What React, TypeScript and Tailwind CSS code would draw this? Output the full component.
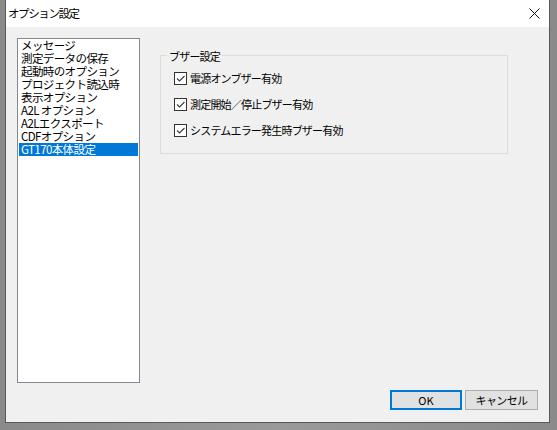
const font = "font-['Noto_Sans_CJK_JP','Noto_Sans',sans-serif]";

const items = [
  'メッセージ',
  '測定データの保存',
  '起動時のオプション',
  'プロジェクト読込時',
  '表示オプション',
  'A2L オプション',
  'A2Lエクスポート',
  'CDFオプション',
  'GT170本体設定',
];

const options = ['電源オンブザー有効', '測定開始／停止ブザー有効', 'システムエラー発生時ブザー有効'];

function CheckBox() {
  return (
    <span className="w-[13px] h-[13px] border border-[#333333] bg-white flex items-center justify-center shrink-0">
      <svg width="11" height="11" viewBox="0 0 11 11">
        <path d="M2 5.5 L4.5 8 L9.5 3" fill="none" stroke="#3a3a3a" strokeWidth="1.1" />
      </svg>
    </span>
  );
}

export default function App() {
  return (
    <div className={`w-[557px] h-[430px] bg-gradient-to-r from-[#8a8a8a] via-[#9a9a9a] to-[#8a8a8a] overflow-hidden text-black ${font}`}>
      {/* Dialog window */}
      <div className="ml-[5px] w-[545px] h-[423px] border-x border-b border-[#555a60] flex flex-col bg-[#f0f0f0]">
        {/* Title bar */}
        <div className="h-[27px] bg-white flex items-center justify-between pl-[2px] pr-[9px]">
          <span className="text-[11.5px] leading-none tracking-[-1.4px]">オプション設定</span>
          <svg width="11" height="11" viewBox="0 0 11 11">
            <path d="M0.5 0.5 L10.5 10.5 M10.5 0.5 L0.5 10.5" stroke="#111" strokeWidth="1" />
          </svg>
        </div>

        {/* Body */}
        <div className="flex-1 flex flex-col pt-[11px] pl-[11px] pr-[11px]">
          <div className="flex gap-[20px]">
            {/* List */}
            <div className="w-[123px] h-[345px] border border-[#828790] bg-white px-[1px]">
              {items.map((it, i) => (
                <div
                  key={it}
                  className={`h-[13px] leading-[13px] text-[11.5px] tracking-[-0.6px] pl-[2px] whitespace-nowrap ${
                    i === items.length - 1 ? 'bg-[#0078d7] text-white' : ''
                  }`}
                >
                  {it}
                </div>
              ))}
            </div>

            {/* Group box */}
            <div className="mt-[17px] relative w-[348px] h-[99px] border border-[#dcdcdc] flex flex-col gap-[13px] pt-[16px] pl-[13px]">
              <span className="absolute -top-[6px] left-[6px] px-[2px] bg-[#f0f0f0] text-[11px] leading-[13px] tracking-[-0.8px]">
                ブザー設定
              </span>
              {options.map((o) => (
                <div key={o} className="flex items-center gap-[3px] h-[13px]">
                  <CheckBox />
                  <span className="text-[11px] leading-none tracking-[-0.8px] whitespace-nowrap">{o}</span>
                </div>
              ))}
            </div>
          </div>

          {/* Buttons */}
          <div className="mt-[7px] flex justify-end gap-[3px]">
            <button className="w-[72px] h-[20px] border-2 border-[#0078d7] bg-[#e1e1e1] text-[11px] leading-none">
              OK
            </button>
            <button className="w-[73px] h-[20px] border border-[#adadad] bg-[#e1e1e1] text-[11px] leading-none tracking-[-0.6px]">
              キャンセル
            </button>
          </div>
        </div>
      </div>
    </div>
  );
}
